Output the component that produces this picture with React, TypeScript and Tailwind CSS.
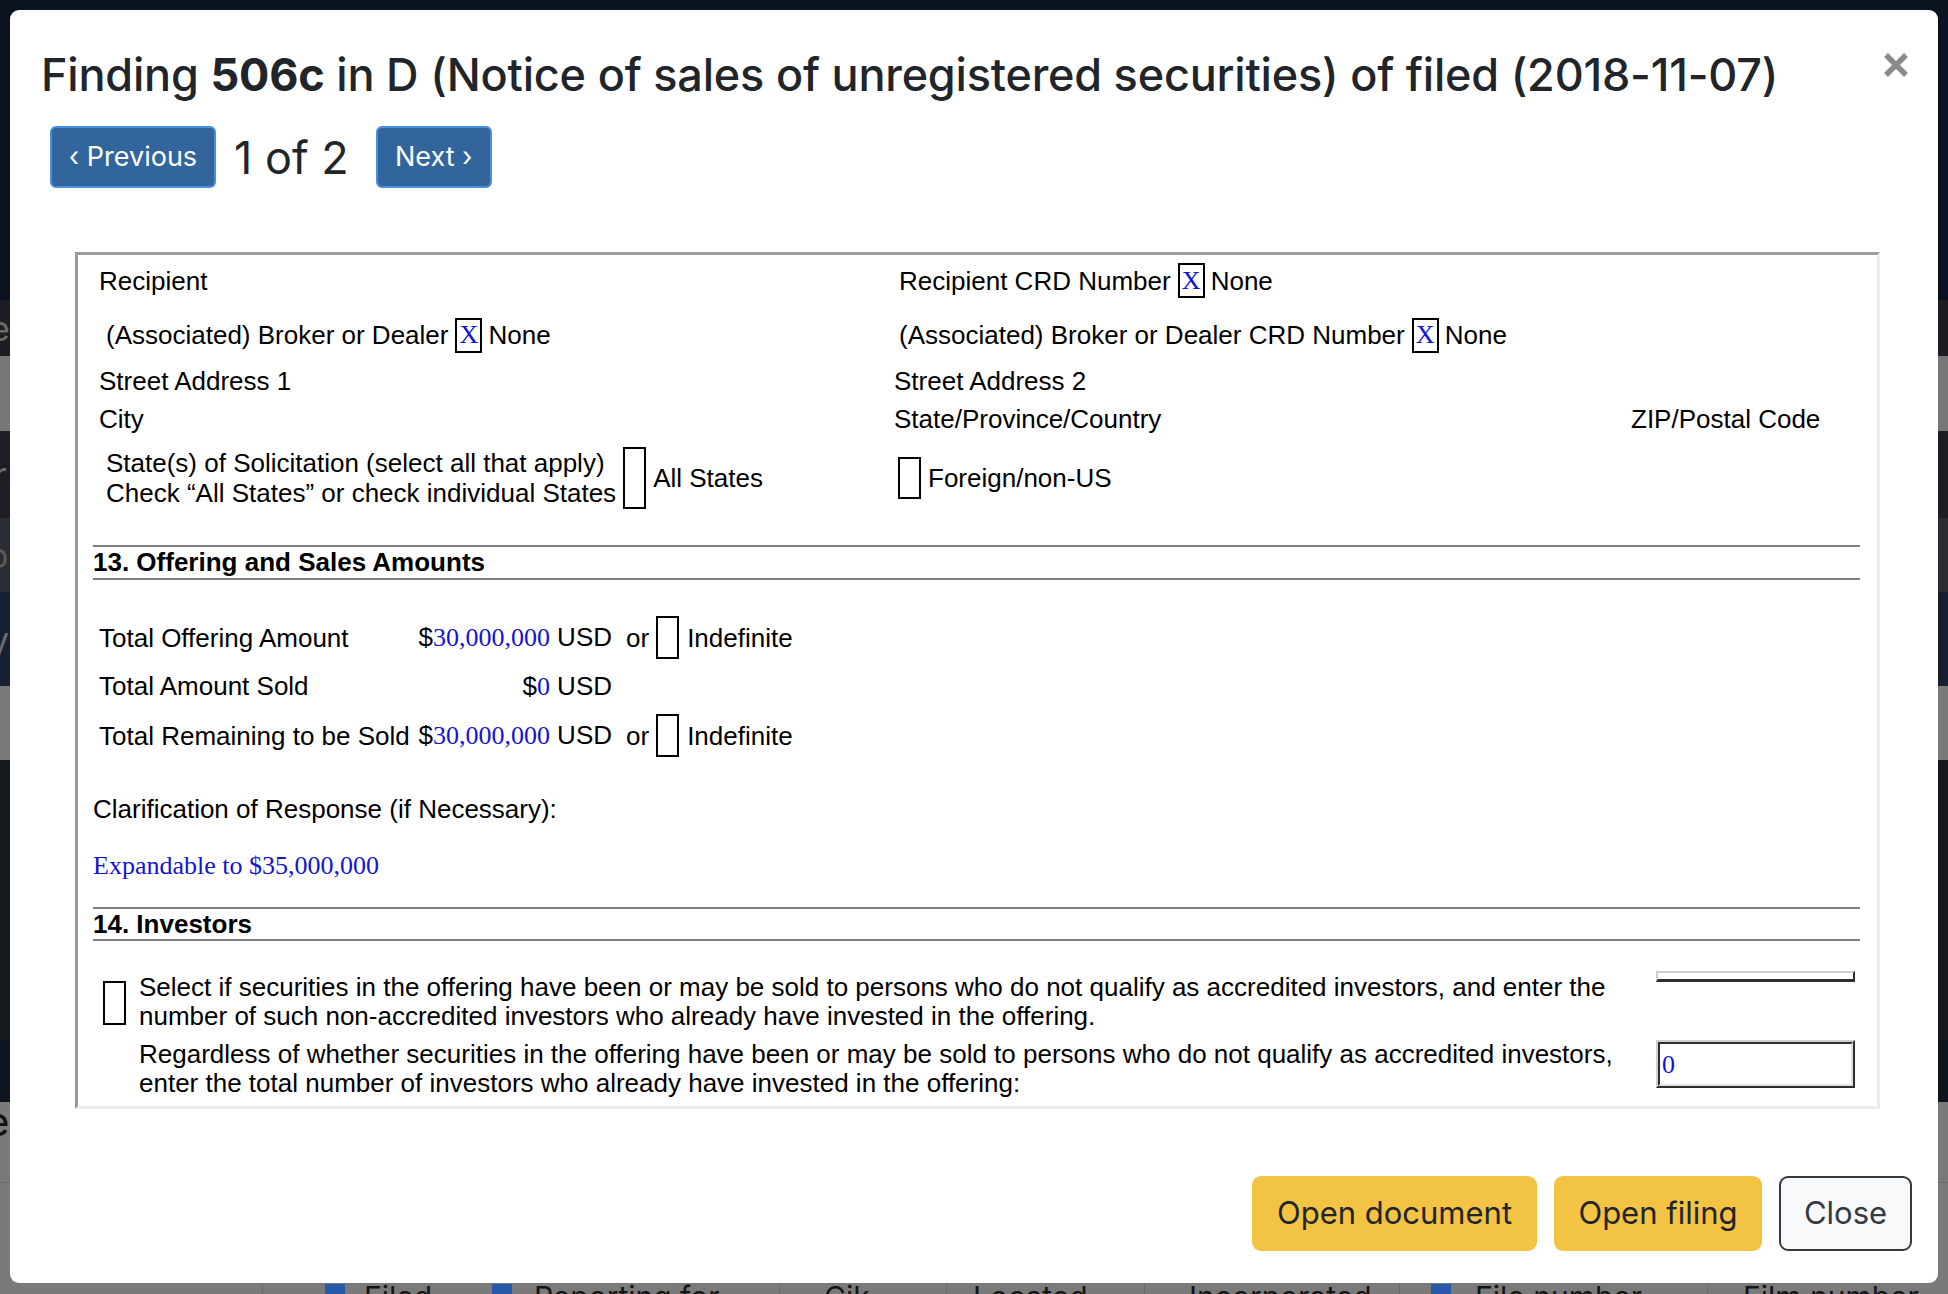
import React from "react";

const ui = "font-['Inter','Noto_Sans',sans-serif]";
const doc = "font-['Liberation_Sans',Arial,sans-serif] text-[26px] leading-[30px] text-black";
const serifBlue = "font-['Liberation_Serif','Times_New_Roman',serif] text-[#1414d2]";

function XBox() {
  return (
    <span
      className={`inline-flex items-center justify-center w-[27px] h-[35px] border-2 border-black ${serifBlue} text-[26px] leading-none`}
    >
      X
    </span>
  );
}

function Hr() {
  return <div className="ml-[15px] w-[1767px] h-[2px] bg-[#808080]" />;
}

function Amount({ value }: { value: string }) {
  return (
    <span>
      $<span className={serifBlue}>{value}</span> USD
    </span>
  );
}

function Backdrop() {
  // dimmed page that sits behind the modal
  return (
    <div className="flex flex-col h-full">
      <div className="h-[300px] bg-[#0b1320]" />
      <div className="h-[56px] bg-[#1c1e23] flex items-center text-[34px] text-[#6b6b6b] font-['Inter',sans-serif]">
        <span className="-ml-[10px]">e</span>
      </div>
      <div className="h-[75px] bg-[#767676]" />
      <div className="h-[87px] bg-[#1d1f24] flex items-center text-[34px] text-[#6b6b6b] font-['Inter',sans-serif]">
        <span className="-ml-[6px]">r</span>
      </div>
      <div className="h-[74px] bg-[#2a2d32] flex items-center text-[34px] text-[#5a5a5a] font-['Inter',sans-serif]">
        <span className="-ml-[12px]">o</span>
      </div>
      <div className="h-[94px] bg-[#162030] flex items-center text-[34px] text-[#6b6b6b] font-['Inter',sans-serif]">
        <span className="-ml-[10px]">y</span>
      </div>
      <div className="h-[74px] bg-[#797979]" />
      <div className="h-[280px] bg-[#15181d]" />
      <div className="h-[62px] bg-[#0e1520]" />
      <div className="flex-1 bg-[#7a7a7a] flex flex-col">
        <div className="h-[40px] flex items-center text-[40px] text-[#111] font-['Inter',sans-serif]">
          <span className="-ml-[14px]">e</span>
        </div>
        <div className="mt-[40px] h-[1px] bg-[#6a6a6a]" />
        <div className="mt-auto h-[20px] flex text-[30px] leading-none text-[#151515] font-['Inter',sans-serif]">
          <div className="w-[263px] border-r border-[#6a6a6a]" />
          <div className="w-[209px] flex items-start pl-[62px] gap-[19px]">
            <span className="w-[20px] h-[24px] bg-[#2858a8] mt-[10px]" />
            <span className="mt-[8px]">Filed</span>
          </div>
          <div className="w-[308px] border-r border-[#6a6a6a] flex items-start pl-[20px] gap-[22px]">
            <span className="w-[20px] h-[24px] bg-[#2858a8] mt-[10px]" />
            <span className="mt-[8px]">Reporting for</span>
          </div>
          <div className="w-[167px] border-r border-[#6a6a6a] pl-[44px] pt-[8px]">Cik</div>
          <div className="w-[198px] border-r border-[#6a6a6a] pl-[26px] pt-[8px]">Located</div>
          <div className="w-[255px] border-r border-[#6a6a6a] pl-[44px] pt-[8px]">Incorporated</div>
          <div className="w-[308px] border-r border-[#6a6a6a] flex items-start pl-[31px] gap-[24px]">
            <span className="w-[20px] h-[24px] bg-[#2858a8] mt-[10px]" />
            <span className="mt-[8px]">File number</span>
          </div>
          <div className="flex-1 pl-[35px] pt-[8px]">Film number</div>
        </div>
      </div>
    </div>
  );
}

function DocumentFrame() {
  return (
    <div className="ml-[65px] w-[1805px] h-[857px] overflow-hidden border-[3px] border-t-[#9b9b9b] border-l-[#9b9b9b] border-r-[#ececec] border-b-[#ececec]">
      <div className={doc}>
        {/* recipient block */}
        <div className="grid grid-cols-[795px_737px_1fr] pl-[21px] mt-[8px] h-[35px] items-center">
          <div>Recipient</div>
          <div className="pl-[5px] flex items-center">
            <span>Recipient CRD Number</span>
            <span className="ml-[7px] mr-[6px]">
              <XBox />
            </span>
            <span>None</span>
          </div>
          <div />
        </div>

        <div className="grid grid-cols-[795px_737px_1fr] pl-[21px] mt-[19px] h-[36px] items-center">
          <div className="pl-[7px] flex items-center">
            <span>(Associated) Broker or Dealer</span>
            <span className="ml-[7px] mr-[6px]">
              <XBox />
            </span>
            <span>None</span>
          </div>
          <div className="pl-[5px] flex items-center">
            <span>(Associated) Broker or Dealer CRD Number</span>
            <span className="ml-[7px] mr-[6px]">
              <XBox />
            </span>
            <span>None</span>
          </div>
          <div />
        </div>

        <div className="grid grid-cols-[795px_737px_1fr] pl-[21px] mt-[13px] h-[30px]">
          <div>Street Address 1</div>
          <div>Street Address 2</div>
          <div />
        </div>

        <div className="grid grid-cols-[795px_737px_1fr] pl-[21px] mt-[8px] h-[30px]">
          <div>City</div>
          <div>State/Province/Country</div>
          <div>ZIP/Postal Code</div>
        </div>

        <div className="grid grid-cols-[795px_737px_1fr] pl-[21px] mt-[13px] h-[62px] items-center">
          <div className="pl-[7px] flex items-center">
            <div>
              State(s) of Solicitation (select all that apply)
              <br />
              Check “All States” or check individual States
            </div>
            <span className="ml-[7px] w-[23px] h-[62px] border-2 border-black" />
            <span className="ml-[7px]">All States</span>
          </div>
          <div className="pl-[4px] flex items-center">
            <span className="w-[23px] h-[42px] border-2 border-black" />
            <span className="ml-[7px]">Foreign/non-US</span>
          </div>
          <div />
        </div>

        {/* 13 */}
        <div className="mt-[36px]">
          <Hr />
        </div>
        <div className="ml-[15px] h-[30px] font-bold">13. Offering and Sales Amounts</div>
        <div className="mt-[1px]">
          <Hr />
        </div>

        <div className="mt-[36px] h-[43px] flex items-center">
          <div className="w-[339px] pl-[21px]">Total Offering Amount</div>
          <div className="w-[195px] text-right">
            <Amount value="30,000,000" />
          </div>
          <span className="ml-[14px]">or</span>
          <span className="ml-[7px] w-[23px] h-[43px] border-2 border-black" />
          <span className="ml-[8px]">Indefinite</span>
        </div>
        <div className="mt-[12px] h-[30px] flex items-center">
          <div className="w-[339px] pl-[21px]">Total Amount Sold</div>
          <div className="w-[195px] text-right">
            <Amount value="0" />
          </div>
        </div>
        <div className="mt-[13px] h-[43px] flex items-center">
          <div className="w-[339px] pl-[21px]">Total Remaining to be Sold</div>
          <div className="w-[195px] text-right">
            <Amount value="30,000,000" />
          </div>
          <span className="ml-[14px]">or</span>
          <span className="ml-[7px] w-[23px] h-[43px] border-2 border-black" />
          <span className="ml-[8px]">Indefinite</span>
        </div>

        <div className="mt-[37px] h-[30px] pl-[15px]">Clarification of Response (if Necessary):</div>
        <div className={`mt-[27px] h-[30px] pl-[15px] ${serifBlue}`}>Expandable to $35,000,000</div>

        {/* 14 */}
        <div className="mt-[26px]">
          <Hr />
        </div>
        <div className="ml-[15px] h-[30px] font-bold">14. Investors</div>
        <div>
          <Hr />
        </div>

        <div className="mt-[32px] flex items-start leading-[29px]">
          <div className="w-[61px] pl-[25px] pt-[8px]">
            <div className="w-[23px] h-[44px] border-2 border-black" />
          </div>
          <div className="w-[1517px]">
            Select if securities in the offering have been or may be sold to persons who do not qualify as accredited investors, and enter the
            <br />
            number of such non-accredited investors who already have invested in the offering.
          </div>
          <div className="w-[199px] h-[11px] -mt-[2px] border-t-2 border-l-2 border-t-[#cfcfcf] border-l-[#cfcfcf] border-b-[3px] border-r-2 border-b-[#2e2e2e] border-r-[#2e2e2e]" />
        </div>
        <div className="mt-[9px] flex items-start leading-[29px]">
          <div className="w-[61px]" />
          <div className="w-[1517px]">
            Regardless of whether securities in the offering have been or may be sold to persons who do not qualify as accredited investors,
            <br />
            enter the total number of investors who already have invested in the offering:
          </div>
          <div className="w-[199px] h-[48px] border-2 border-t-[#cfcfcf] border-l-[#cfcfcf] border-b-[#2e2e2e] border-r-[#2e2e2e]">
            <div className="h-full border-2 border-t-[#2e2e2e] border-l-[#2e2e2e] border-b-[#e0e0e0] border-r-[#e0e0e0] flex items-center pl-[2px]">
              <span className={`${serifBlue} text-[26px]`}>0</span>
            </div>
          </div>
        </div>
      </div>
    </div>
  );
}

export default function App() {
  return (
    <div className="relative w-[1948px] h-[1294px] overflow-hidden bg-[#0b1220]">
      <Backdrop />

      {/* modal */}
      <div className={`absolute left-[10px] top-[10px] w-[1928px] h-[1273px] rounded-[9px] bg-white flex flex-col ${ui} text-[#212529]`}>
        <div className="flex items-start pl-[31px] pr-[29px] pt-[38px]">
          <h4 className="text-[45px] leading-[54px] font-medium tracking-[-0.2px]">
            Finding <span className="font-bold">506c</span> in D (Notice of sales of unregistered securities) of filed (2018-11-07)
          </h4>
          <svg className="ml-auto mt-[4px]" width="26" height="26" viewBox="0 0 26 26">
            <path d="M3 3 L23 23 M23 3 L3 23" stroke="#8a8a8a" strokeWidth="5.5" strokeLinecap="butt" />
          </svg>
        </div>

        <div className="flex items-center pl-[40px] mt-[24px]">
          <button className="w-[166px] h-[62px] rounded-[6px] bg-[#32659c] border-2 border-[#4b8fe2] text-white text-[27px]">
            ‹ Previous
          </button>
          <span className="ml-[18px] text-[45px] leading-none">1 of 2</span>
          <button className="ml-[27px] w-[116px] h-[62px] rounded-[6px] bg-[#32659c] border-2 border-[#4b8fe2] text-white text-[27px]">
            Next ›
          </button>
        </div>

        <div className="mt-[64px]">
          <DocumentFrame />
        </div>

        <div className="mt-[67px] flex justify-end gap-[17px] pr-[26px]">
          <button className="w-[285px] h-[75px] rounded-[9px] bg-[#f3c343] text-[31px] text-[#212529]">Open document</button>
          <button className="w-[208px] h-[75px] rounded-[9px] bg-[#f3c343] text-[31px] text-[#212529]">Open filing</button>
          <button className="w-[133px] h-[75px] rounded-[9px] bg-[#f8f9fa] border-2 border-[#343a40] text-[31px] text-[#343a40]">
            Close
          </button>
        </div>
      </div>
    </div>
  );
}
